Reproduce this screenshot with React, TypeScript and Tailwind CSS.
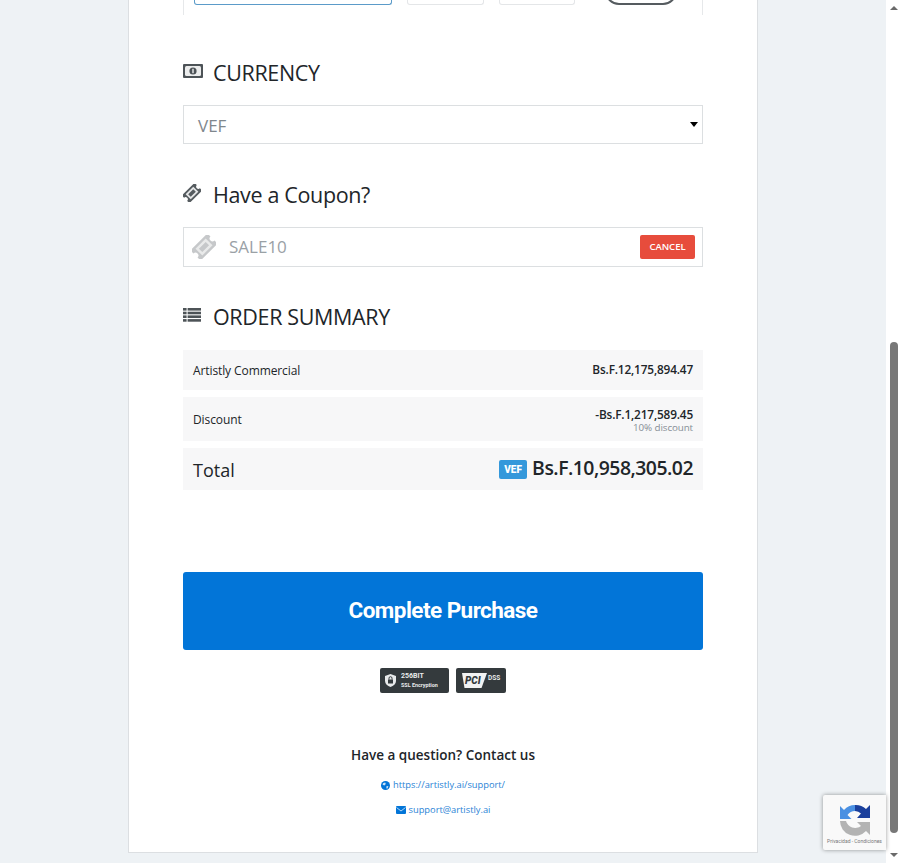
const font = "font-['Open_Sans','Noto_Sans',sans-serif]";

function MoneyIcon() {
  return (
    <svg width="20" height="14" viewBox="0 0 20 14">
      <rect width="20" height="14" rx="1" fill="#4d5357" />
      <rect x="2" y="2" width="16" height="10" rx="1.5" fill="#eceded" />
      <circle cx="10" cy="7" r="3.6" fill="#4d5357" />
      <rect x="9.3" y="4.8" width="1.4" height="4.4" fill="#eceded" />
    </svg>
  );
}

function TicketIcon({ size, dark, light }: { size: number; dark: string; light: string }) {
  return (
    <svg width={size} height={size} viewBox="0 0 20 20">
      <g transform="rotate(-45 10 10)">
        <path d="M0 4h20v3.6a2.4 2.4 0 0 0 0 4.8V16H0v-3.6a2.4 2.4 0 0 0 0-4.8z" fill={dark} />
        <rect x="4" y="6" width="12" height="8" fill={light} />
        <rect x="6" y="8" width="8" height="4" fill={dark} />
      </g>
    </svg>
  );
}

function ListIcon() {
  return (
    <svg width="18" height="14" viewBox="0 0 18 14" fill="#4d5357">
      <rect y="0" width="3.6" height="2.6" />
      <rect x="4.6" y="0" width="13.4" height="2.6" />
      <rect y="3.7" width="3.6" height="2.6" />
      <rect x="4.6" y="3.7" width="13.4" height="2.6" />
      <rect y="7.4" width="3.6" height="2.6" />
      <rect x="4.6" y="7.4" width="13.4" height="2.6" />
      <rect y="11.1" width="3.6" height="2.6" />
      <rect x="4.6" y="11.1" width="13.4" height="2.6" />
    </svg>
  );
}

function GlobeIcon() {
  return (
    <svg width="9" height="9" viewBox="0 0 9 9">
      <circle cx="4.5" cy="4.5" r="4.5" fill="#0275d8" />
      <path d="M2 2.2 4.2 1.4 4.8 3 3.4 4.6 1.6 3.8zM5.4 5.2 7.4 5 6.6 7.4 5.4 7.6z" fill="#cfe4f7" />
    </svg>
  );
}

function MailIcon() {
  return (
    <svg width="10" height="8" viewBox="0 0 10 8">
      <rect width="10" height="8" rx="1" fill="#0275d8" />
      <path d="M0.5 1.5 5 5l4.5-3.5" fill="none" stroke="#fff" strokeWidth="0.7" />
    </svg>
  );
}

function Heading({ icon, children, className }: { icon: React.ReactNode; children: React.ReactNode; className: string }) {
  return (
    <div className={`flex items-center ${className}`}>
      <span className="flex w-[30px] -translate-y-[2px]">{icon}</span>
      <h2 className="text-[21.5px] leading-[30px] tracking-[-0.35px] text-[#212529]">{children}</h2>
    </div>
  );
}

function ShieldBadge() {
  return (
    <div className="flex h-[25px] w-[69px] items-center gap-[5px] rounded-[2px] bg-[#343a3d] pl-[5px]">
      <svg width="11" height="13" viewBox="0 0 11 13">
        <path d="M5.5 0 11 2v5c0 3-2.5 5-5.5 6C2.5 12 0 10 0 7V2z" fill="#e8eaeb" />
        <rect x="3" y="5.5" width="5" height="4" fill="#343a3d" />
        <path d="M4 5.5V4.2a1.5 1.5 0 0 1 3 0v1.3" fill="none" stroke="#343a3d" />
      </svg>
      <div className="flex flex-col font-['Roboto',sans-serif] font-bold text-[#e8eaeb]">
        <span className="text-[7px] leading-[9px]">256BIT</span>
        <span className="text-[5.4px] leading-[8px] whitespace-nowrap">SSL Encryption</span>
      </div>
    </div>
  );
}

function PciBadge() {
  return (
    <div className="flex h-[25px] w-[50px] items-center rounded-[2px] bg-[#343a3d] pl-[6px]">
      <div className="flex h-[15px] w-[25px] items-center bg-[#f2f3f3] pl-[3px] [clip-path:polygon(0_0,100%_0,78%_100%,10%_100%)]">
        <span className="font-['Roboto',sans-serif] text-[10px] leading-none font-black text-[#343a3d] italic">PCI</span>
      </div>
      <span className="-mt-[5px] ml-[1px] font-['Roboto',sans-serif] text-[6.5px] leading-none font-bold text-[#e8eaeb]">DSS</span>
    </div>
  );
}

function Recaptcha() {
  return (
    <div className="absolute top-[795px] left-[823px] flex h-[55px] w-[63px] flex-col items-center overflow-hidden rounded-l-[2px] bg-[#f9f9f9] pt-[8px] shadow-[0_0_4px_rgba(0,0,0,0.4)]">
      <svg width="34" height="34" viewBox="0 0 34 34">
        <path d="M17 2a15 15 0 0 0-11 5L2 3v13h11.5l-4-4A10 10 0 0 1 17 8z" fill="#4a90e2" />
        <path d="M17 2v6a9 9 0 0 1 6 2.5L19 15h13V2l-4 4A15 15 0 0 0 17 2z" fill="#1a3f9c" />
        <path d="M2 18h6a9.5 9.5 0 0 0 15 5l-4-4h13v13l-4-4A15 15 0 0 1 2 18z" fill="#b3b3b3" />
      </svg>
      <span className="mt-[1px] font-['Roboto',sans-serif] text-[5px] leading-[7px] whitespace-nowrap text-[#777]">
        Privacidad - Condiciones
      </span>
    </div>
  );
}

export default function App() {
  return (
    <div className={`relative flex h-[863px] overflow-hidden bg-[#eef2f5] ${font}`}>
      <div className="flex-1">
        <main className="ml-[128px] h-[853px] w-[630px] border-x border-b border-[#dcdfe2] bg-white pl-[54px]">
          {/* Rest of the plan selector, scrolled off the top */}
          <div className="flex h-[15px] w-[520px] items-start border-x border-[#e6e8ea] pl-[10px]">
            <div className="h-[5px] w-[198px] rounded-b-[3px] border-x border-b border-[#5b9bc9]" />
            <div className="ml-[15px] h-[5px] w-[77px] rounded-b-[3px] border-x border-b border-[#e4e6e8]" />
            <div className="ml-[15px] h-[5px] w-[76px] rounded-b-[3px] border-x border-b border-[#e4e6e8]" />
            <div className="-mt-[23px] ml-[30px] h-[28px] w-[72px] rounded-[14px] border-2 border-[#555b5f]" />
          </div>

          <Heading icon={<MoneyIcon />} className="mt-[43px]">CURRENCY</Heading>
          <div className="relative mt-[17px] flex h-[39px] w-[520px] items-center border border-[#dcdfe1] pt-[2px] pl-[14px]">
            <span className="text-[17px] text-[#7f878d]">VEF</span>
            <span className="absolute top-[16px] right-[4px] h-0 w-0 border-x-[4px] border-t-[5px] border-x-transparent border-t-black" />
          </div>

          <Heading icon={<TicketIcon size={18} dark="#555b5f" light="#e6e7e8" />} className="mt-[36px]">Have a Coupon?</Heading>
          <div className="mt-[17px] flex h-[40px] w-[520px] items-center border border-[#dcdfe1] pr-[7px]">
            <span className="ml-[8px] flex"><TicketIcon size={24} dark="#c6c8ca" light="#e9eaea" /></span>
            <span className="ml-[13px] text-[17px] text-[#9aa1a6]">SALE10</span>
            <button className="ml-auto h-[24px] w-[55px] rounded-[2px] bg-[#e74c3c] text-[9.5px] font-semibold text-white">CANCEL</button>
          </div>

          <Heading icon={<ListIcon />} className="mt-[35px]">ORDER SUMMARY</Heading>
          <div className="mt-[18px] flex h-[40px] w-[520px] items-center justify-between bg-[#f7f7f8] px-[10px] pt-[2px] text-[12px] tracking-[-0.1px] text-[#212529]">
            <span>Artistly Commercial</span>
            <span className="-translate-y-[1px] text-[11.8px] tracking-[-0.15px] font-semibold">Bs.F.12,175,894.47</span>
          </div>
          <div className="mt-[7px] flex h-[44px] w-[520px] items-center justify-between bg-[#f7f7f8] px-[10px] pt-[1px] text-[12px] tracking-[-0.1px] text-[#212529]">
            <span>Discount</span>
            <div className="flex flex-col items-end">
              <span className="text-[11.8px] leading-[16px] tracking-[-0.15px] font-semibold">-Bs.F.1,217,589.45</span>
              <span className="text-[9.8px] leading-[12px] text-[#868e96]">10% discount</span>
            </div>
          </div>
          <div className="mt-[7px] flex h-[42px] w-[520px] items-center justify-between bg-[#f7f7f8] px-[10px] text-[#212529]">
            <span className="pt-[2px] text-[18px]">Total</span>
            <div className="flex items-center gap-[5px]">
              <span className="flex h-[19px] w-[28px] items-center justify-center rounded-[2px] bg-[#3498db] font-['Roboto',sans-serif] text-[10px] font-black text-white">VEF</span>
              <span className="-translate-y-[1px] text-[19.4px] leading-[26px] tracking-[-0.5px] font-semibold">Bs.F.10,958,305.02</span>
            </div>
          </div>

          <button className="mt-[82px] block h-[78px] w-[520px] rounded-[3px] bg-[#0275d8] font-['Roboto',sans-serif] text-[22.5px] font-bold tracking-[-0.55px] text-white">
            Complete Purchase
          </button>
          <div className="mt-[18px] flex w-[520px] justify-center gap-[7px]">
            <ShieldBadge />
            <PciBadge />
          </div>

          <div className="flex w-[520px] flex-col items-center">
            <h3 className="mt-[51px] text-[13.5px] leading-[22px] font-semibold text-[#212529]">Have a question? Contact us</h3>
            <a className="mt-[12px] flex items-center gap-[3px] text-[9.3px] leading-[14px] text-[#2a83d6]">
              <GlobeIcon />
              https://artistly.ai/support/
            </a>
            <a className="mt-[11px] flex items-center gap-[3px] text-[9.3px] leading-[14px] text-[#2a83d6]">
              <MailIcon />
              support@artistly.ai
            </a>
          </div>
        </main>
      </div>

      {/* Window scrollbar */}
      <div className="flex w-[15px] flex-col items-center justify-between bg-white py-[6px]">
        <span className="h-0 w-0 border-x-[4px] border-b-[4px] border-x-transparent border-b-[#6a6a6a]" />
        <div className="mt-[332px] w-[8px] flex-1 rounded-[4px] bg-[#787878]" />
        <span className="mt-[20px] h-0 w-0 border-x-[4px] border-t-[4px] border-x-transparent border-t-[#6a6a6a]" />
      </div>

      <Recaptcha />
    </div>
  );
}
